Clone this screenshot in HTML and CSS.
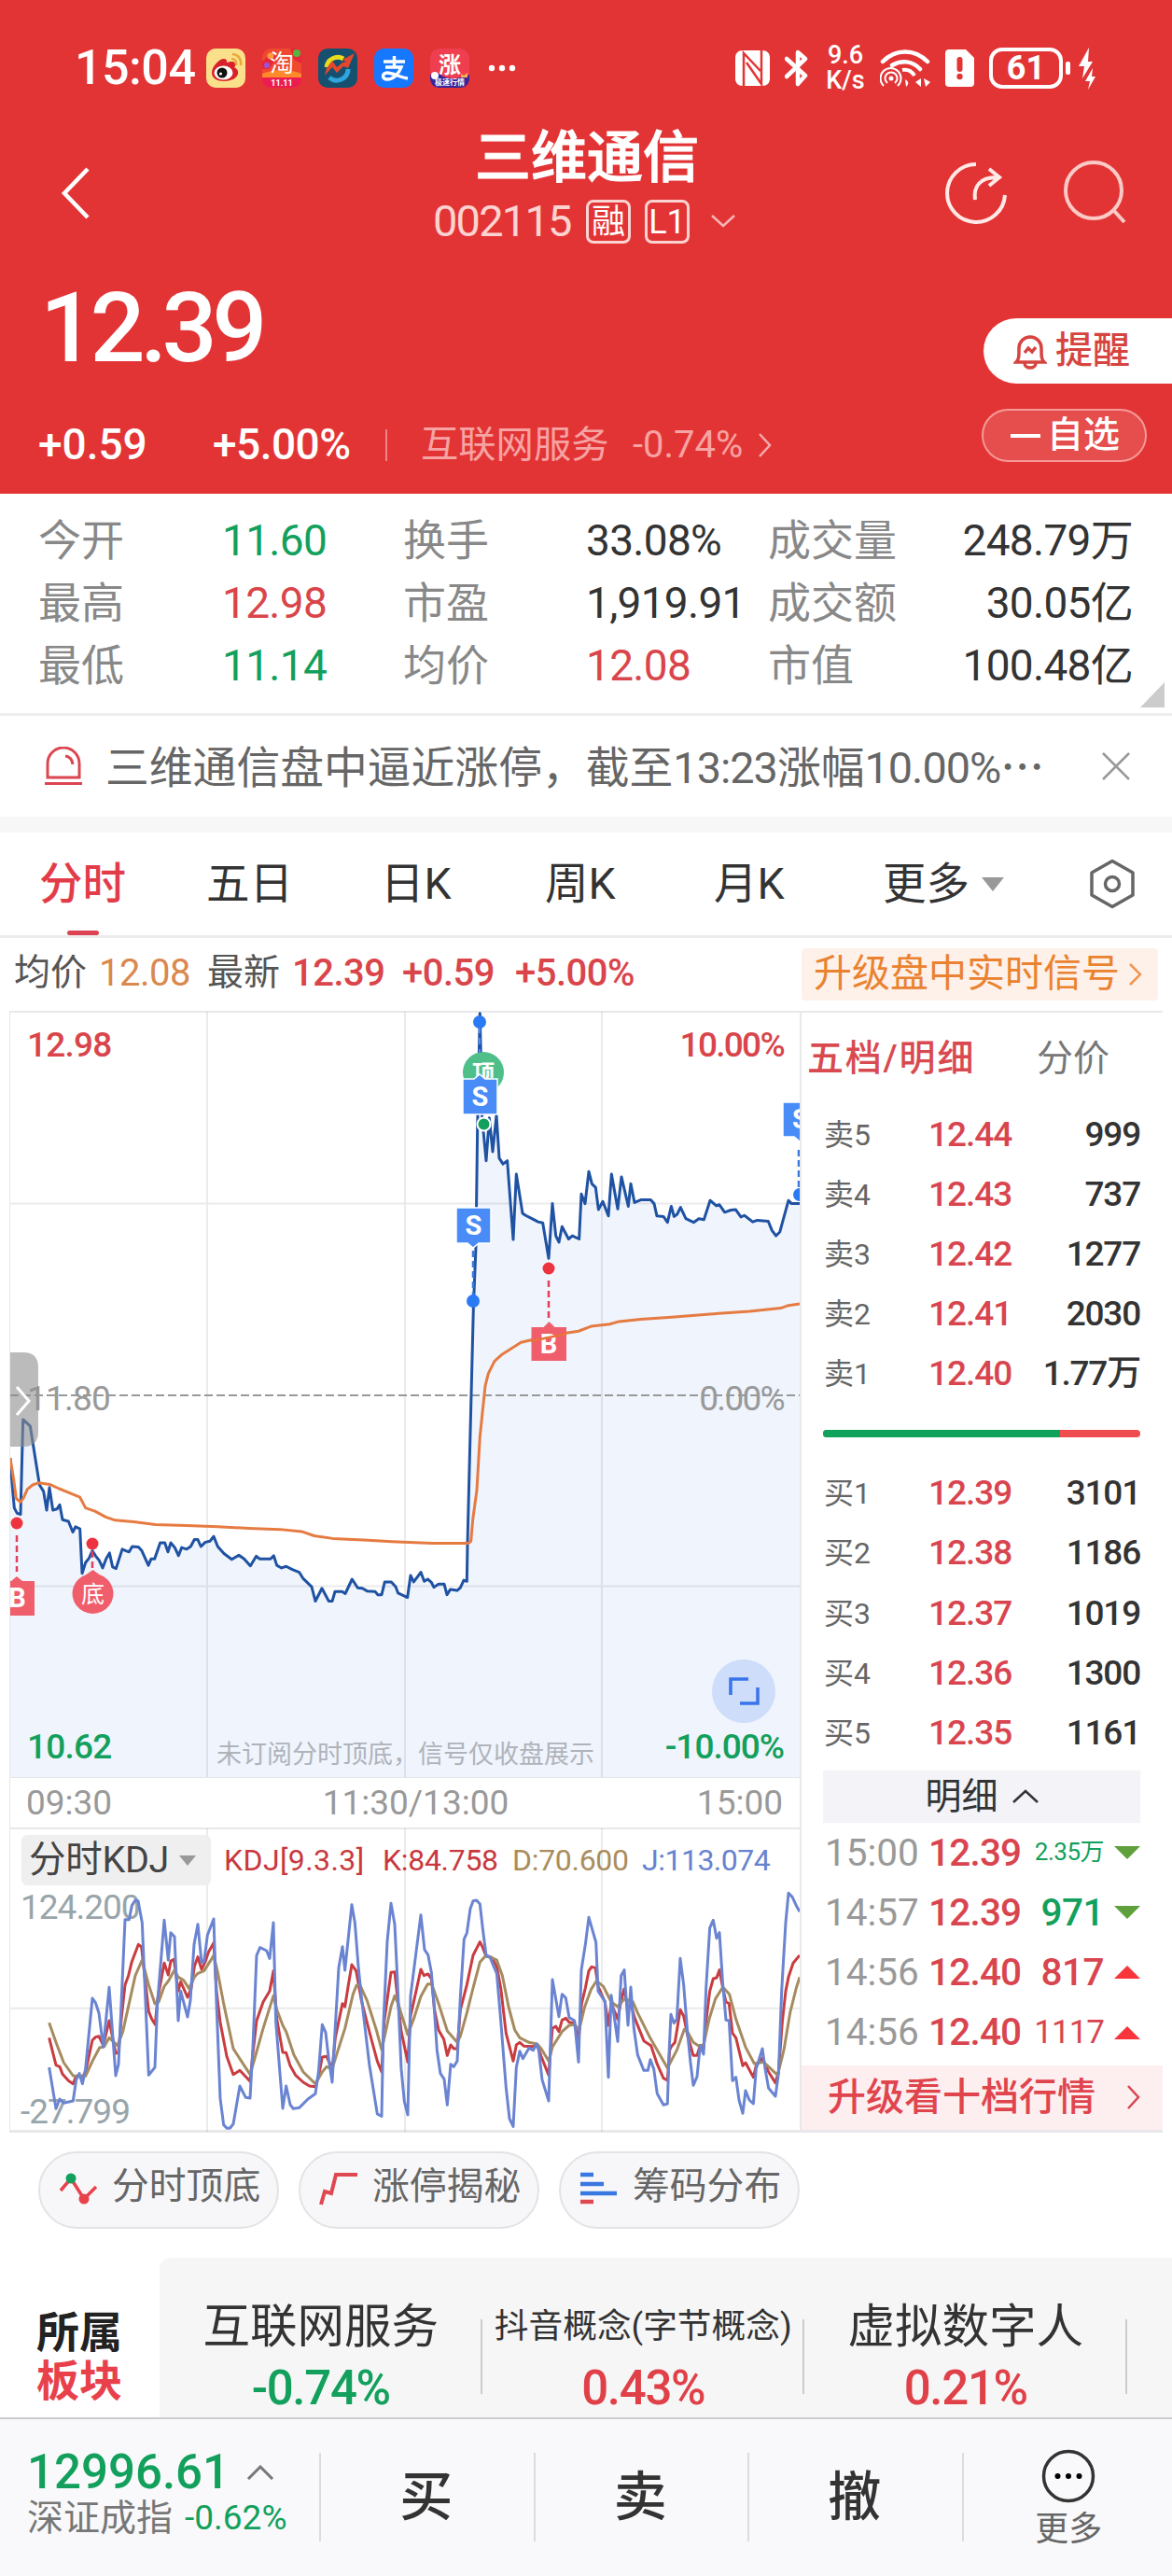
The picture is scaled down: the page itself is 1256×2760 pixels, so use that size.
FILE: index.html
```html
<!DOCTYPE html>
<html lang="zh-CN">
<head>
  <meta charset="UTF-8">
  <meta name="viewport" content="width=device-width, initial-scale=1.0">
  <title>三维通信 002115</title>
  <link rel="stylesheet" href="styles.css">
</head>
<body>
  <div class="page">
    <header class="header">
      <div class="status">
        <span class="clock">15:04</span>
        <div class="apps">
          <svg class="app" viewBox="0 0 42 42">
            <rect width="42" height="42" rx="10" fill="#fbe08c"/>
            <path d="M6 26C6 19 14 11 19 11c4 0 3 4 3 4s8-3 9 1c1 3-1 4-1 4s5 2 4 7c-1 5-8 8-15 8S6 32 6 26z" fill="#d8202a"/>
            <ellipse cx="18.500" cy="26" rx="10" ry="7.500" fill="#fff"/>
            <circle cx="17" cy="26" r="5.500" fill="#111"/>
            <circle cx="15.500" cy="27" r="1.600" fill="#fff"/>
            <path d="M28 6c6 0 10 5 9 12M27 11c4 0 6 3 5 7" fill="none" stroke="#e9a93a" stroke-width="2.600"/>
          </svg>
          <svg class="app" viewBox="0 0 42 42">
            <rect width="42" height="42" rx="10" fill="#f0492f"/>
            <path d="M0 14 10 4l6 6-9 12H0zM30 0h4c5 0 8 4 8 8v8l-8-4z" fill="#e5273c"/>
            <circle cx="37" cy="5" r="4" fill="#58b23c"/>
            <circle cx="9" cy="8" r="3.500" fill="#ff9b3d"/>
            <circle cx="5" cy="18" r="3" fill="#9a55d4"/>
            <path d="M0 28h42v4c0 6-4 10-10 10H10C4 42 0 38 0 32z" fill="#ec1c51"/>
            <path d="M0 27q21-8 42 0v4H0z" fill="#ff8a2b"/>
            <text x="21" y="25" class="app-char" font-size="26">淘</text>
            <text x="21" y="40" class="app-char" font-size="9" font-weight="700">11.11</text>
          </svg>
          <svg class="app" viewBox="0 0 42 42">
            <rect width="42" height="42" rx="10" fill="#15506f"/>
            <path d="M9 20a12 12 0 0 1 18-9" fill="none" stroke="#e8dc1f" stroke-width="5"/>
            <path d="M12 31a12 12 0 0 0 20-9" fill="none" stroke="#2fa5dd" stroke-width="5"/>
            <path d="m7 29 8-9 5 6 7-7 5 2L39 5 26 12l4 2-4 1-6 5-5-7-6 8z" fill="#e4472b"/>
          </svg>
          <svg class="app" viewBox="0 0 42 42">
            <rect width="42" height="42" rx="10" fill="#1677ff"/>
            <path d="M10 14h23M21.500 8v12M12 20h17c-3 8-9 13-15 13-6 0-6-7 0-7 6 0 14 5 22 6" fill="none" stroke="#fff" stroke-width="3.400"/>
          </svg>
          <svg class="app" viewBox="0 0 42 42">
            <rect width="42" height="42" rx="10" fill="#ee3e50"/>
            <path d="M0 28q8-4 14 2 12 5 28-2v4c0 6-4 10-10 10H10C4 42 0 38 0 32z" fill="#3a249a"/>
            <circle cx="5" cy="29" r="4" fill="#fff"/>
            <path d="m33 27 3 2 4-3v5h-7z" fill="#ffb54a"/>
            <text x="21" y="26" class="app-char" font-size="24" font-weight="700">涨</text>
            <text x="21" y="39" class="app-char" font-size="8" font-weight="700">极速行情</text>
          </svg>
        </div>
        <svg class="dots" viewBox="0 0 30 10" fill="#fff"><circle cx="4" cy="5" r="3.200"/><circle cx="15" cy="5" r="3.200"/><circle cx="26" cy="5" r="3.200"/></svg>
        <svg class="sys nfc" viewBox="0 0 37 38">
          <path d="M8 0h21c5 0 8 3 8 8v22c0 5-3 8-8 8H8c-5 0-8-3-8-8V8c0-5 3-8 8-8z" fill="#fff"/>
          <path d="M9 38V3l18 19M12 13l16 23V0" stroke="#e33435" stroke-width="2.500" fill="none"/>
        </svg>
        <svg class="sys bt" viewBox="0 0 25 42"><path d="m2 11 20 18-8 9V4l8 7L2 30" fill="none" stroke="#fff" stroke-width="4.500" stroke-linejoin="round" stroke-linecap="round"/></svg>
        <div class="speed"><span>9.6</span><span>K/s</span></div>
        <svg class="sys wifi" viewBox="0 0 54 42" fill="none" stroke="#fff">
          <path d="M3 14c14-14 34-14 48 0M13 18c10-6 22-5 30 4" stroke-width="4.500" stroke-linecap="round"/>
          <path d="M24 23c6-1 10 1 13 6" stroke-width="4"/>
          <path d="M4 40a11 11 0 1 1 15 0M8 37a6.500 6.500 0 1 1 8 0" stroke-width="2"/>
          <circle cx="12" cy="32" r="2.500" fill="#fff" stroke="none"/>
          <path d="M27 33q6 3 1 8zM38 36l6-4v9zM47 32l7 4-5 5z" fill="#fff" stroke="none"/>
        </svg>
        <svg class="sys sim" viewBox="0 0 31 40"><path d="M4 0h18l9 9v27q0 4-4 4H4q-4 0-4-4V4q0-4 4-4z" fill="#fff"/><path d="M15.500 11v10" stroke="#e33435" stroke-width="6" stroke-linecap="round"/><circle cx="15.500" cy="29" r="3.200" fill="#e33435"/></svg>
        <div class="battery">61</div>
        <svg class="sys bolt" viewBox="0 0 32 44" fill="#fff"><rect y="15" width="5" height="14" rx="2"/><path d="m25 0-11 20h6l-2 13 11-18h-5zM29 22l-8 14h5l-2 9 8-14h-4z"/></svg>
      </div>

      <div class="nav">
        <svg class="back" viewBox="0 0 32 56"><path d="M29 2 4 28l25 26" fill="none" stroke="#fff" stroke-width="4.500"/></svg>
        <div class="stock">
          <div class="stock-name">三维通信</div>
          <div class="stock-code">
            <span class="code">002115</span>
            <span class="badge">融</span>
            <span class="badge">L1</span>
            <svg class="code-caret" viewBox="0 0 28 16"><path d="m2 2 12 11L26 2" fill="none" stroke="#f6b4b4" stroke-width="2.500"/></svg>
          </div>
        </div>
        <svg class="share" viewBox="0 0 68 68" fill="none" stroke="#ffe9e6" stroke-width="4">
          <path d="M34 3A31 31 0 1 0 65 36"/>
          <path d="M33 41c-2-14 5-24 23-24M48 8l11 9-11 9"/>
        </svg>
        <svg class="search" viewBox="0 0 70 70" fill="none" stroke="#fbc9c6" stroke-width="4"><circle cx="34" cy="34" r="30"/><path d="m56 56 11 12"/></svg>
      </div>

      <div class="quote">
        <div class="price">12.39</div>
        <div class="remind">
          <svg class="bell" viewBox="0 0 36 40" fill="none" stroke="#d64440" stroke-width="3.500"><path d="M3 32c3-3 3-6 3-15a12 12 0 0 1 24 0c0 9 0 12 3 15zM12 33a6 5 0 0 0 12 0"/><path d="m12 22 4-5 4 4 4-5"/></svg>
          提醒
        </div>
      </div>
      <div class="change">
        <span class="chg">+0.59</span>
        <span class="pct">+5.00%</span>
        <i class="line"></i>
        <span class="industry">互联网服务</span>
        <span class="industry-pct">-0.74%</span>
        <svg class="arrow" viewBox="0 0 16 28"><path d="m2 2 11 12L2 26" fill="none" stroke="#f6a9a9" stroke-width="2.500"/></svg>
        <div class="follow"><i></i>自选</div>
      </div>
    </header>

    <section class="stats">
      <span>今开</span><b class="green">11.60</b><span>换手</span><b>33.08%</b><span>成交量</span><b>248.79万</b>
      <span>最高</span><b class="red">12.98</b><span>市盈</span><b>1,919.91</b><span>成交额</span><b>30.05亿</b>
      <span>最低</span><b class="green">11.14</b><span>均价</span><b class="red">12.08</b><span>市值</span><b>100.48亿</b>
      <i class="corner"></i>
    </section>

    <section class="notice">
      <svg class="alarm" viewBox="0 0 40 42" fill="none" stroke="#dc4650" stroke-width="3"><path d="M3 33V18a17 17 0 0 1 34 0v15zM0 39.500h40"/><path d="M22 10q7 1 8 9"/></svg>
      <span class="notice-text">三维通信盘中逼近涨停，截至<i>13:23</i>涨幅<i>10.00%</i><em>⋯</em></span>
      <svg class="close" viewBox="0 0 30 30"><path d="m1 1 28 28M29 1 1 29" stroke="#999" stroke-width="2.500"/></svg>
    </section>

    <nav class="tabs">
      <span class="tab active">分时</span>
      <span class="tab">五日</span>
      <span class="tab">日K</span>
      <span class="tab">周K</span>
      <span class="tab">月K</span>
      <span class="tab">更多</span>
      <i class="tri"></i>
      <svg class="setting" viewBox="0 0 50 54" fill="none" stroke="#666" stroke-width="3.500"><path d="M25 2.500 47 15v24L25 51.500 3 39V15z" stroke-linejoin="round"/><circle cx="25" cy="27" r="7.500"/></svg>
    </nav>

    <div class="info">
      <span class="info-label">均价</span><span class="info-avg">12.08</span>
      <span class="info-label latest">最新</span><span class="info-num">12.39</span><span class="info-num n2">+0.59</span><span class="info-num n3">+5.00%</span>
      <div class="signal">升级盘中实时信号<svg viewBox="0 0 16 26"><path d="m2 2 11 11L2 24" fill="none" stroke="#ef9550" stroke-width="2.500"/></svg></div>
    </div>

    <main class="board">
      <div class="charts">
        <div class="minute">
          <svg class="plot" viewBox="33 41.800 2538 1428.500" preserveAspectRatio="none">
            <polygon class="area" points="33,875 40,930 46,968 55,978 66,980 74,803 97,815 127,925 140,937 150,972 159,930 170,972 183,970 192,962 201,990 220,993 234,1013 243,1003 257,1007 264,1090 275,1070 297,1048 319,1066 330,1080 352,1052 362,1078 373,1081 393,1045 415,1050 425,1040 445,1041 456,1048 477,1075 497,1063 515,1033 530,1033 540,1050 549,1033 574,1057 584,1042 613,1040 625,1027 646,1040 687,1021 700,1040 745,1064 768,1056 805,1076 824,1058 835,1063 870,1063 880,1057 890,1075 962,1088 975,1100 1002,1115 1014,1142 1035,1118 1057,1142 1068,1142 1077,1124 1110,1128 1132,1101 1150,1117 1206,1124 1227,1130 1237,1106 1258,1106 1272,1115 1280,1127 1310,1135 1320,1094 1330,1106 1353,1088 1364,1105 1387,1107 1395,1116 1428,1110 1437,1130 1480,1117 1491,1103 1501,1105 1503,1035 1522,595 1530,480 1535,260 1543,45 1550,240 1563,320 1573,240 1584,303 1596,235 1605,315 1631,320 1650,467 1660,345 1680,418 1745,436 1764,502 1776,400 1787,460 1797,472 1807,443 1828,466 1862,466 1869,382 1881,400 1893,340 1915,370 1924,411 1938,396 1956,423 1966,345 1986,410 1998,350 2020,405 2028,363 2040,398 2092,393 2103,400 2112,423 2146,435 2158,405 2188,407 2205,428 2230,435 2263,430 2283,394 2313,402 2330,416 2365,411 2382,425 2420,434 2470,433 2495,460 2507,453 2535,394 2571,400 2571,1471 33,1471"/>
            <path class="grid" d="M33 400H2571M33 1114H2571M666 42V1471M1302 42V1471M1935 42V1471"/>
            <path class="zero" d="M33 758H2571"/>
            <polyline class="now" points="33,875 40,930 46,968 55,978 66,980 74,803 97,815 127,925 140,937 150,972 159,930 170,972 183,970 192,962 201,990 220,993 234,1013 243,1003 257,1007 264,1090 275,1070 286,1062 297,1048 308,1058 319,1066 330,1080 341,1063 352,1052 362,1078 373,1081 393,1045 405,1048 415,1050 425,1040 445,1041 456,1048 477,1075 486,1063 497,1063 515,1033 530,1033 540,1050 549,1033 562,1042 574,1057 584,1042 600,1045 613,1040 625,1027 636,1027 646,1040 660,1032 675,1030 687,1021 700,1040 720,1053 745,1064 768,1056 785,1063 805,1076 824,1058 835,1063 870,1063 880,1057 890,1075 905,1080 920,1077 940,1083 962,1088 975,1100 1002,1115 1014,1142 1035,1118 1057,1142 1068,1142 1077,1124 1100,1124 1110,1128 1132,1101 1150,1117 1165,1118 1180,1123 1206,1124 1215,1130 1227,1130 1237,1106 1258,1106 1272,1115 1280,1127 1310,1135 1320,1094 1330,1106 1353,1088 1364,1105 1375,1101 1387,1107 1395,1116 1410,1110 1428,1110 1437,1130 1448,1120 1470,1122 1480,1117 1491,1103 1501,1105 1503,1035 1522,595 1530,480 1535,260 1543,45 1550,240 1563,320 1573,240 1584,303 1596,235 1605,315 1617,326 1631,320 1650,467 1660,345 1680,418 1690,422 1710,428 1730,434 1745,436 1764,502 1776,400 1787,460 1797,472 1807,443 1828,466 1840,460 1862,466 1869,382 1881,400 1893,340 1903,363 1915,370 1924,411 1938,396 1956,423 1966,345 1986,410 1998,350 2020,405 2028,363 2040,398 2060,393 2092,393 2103,400 2112,423 2133,424 2146,435 2158,405 2167,424 2177,420 2188,407 2205,428 2230,435 2247,428 2263,430 2283,394 2303,404 2313,402 2330,416 2350,412 2365,411 2382,425 2393,422 2420,434 2435,431 2470,433 2482,450 2495,460 2507,453 2535,394 2545,400 2571,400"/>
            <polyline class="avg" points="33,875 44,915 52,950 65,957 75,950 88,933 105,925 125,921 160,924 190,932 215,938 257,948 275,968 305,974 340,985 370,991 430,994 500,999 600,1001 700,1003 800,1006 900,1008 970,1012 1010,1020 1070,1025 1170,1028 1260,1031 1390,1034 1505,1034 1514,1030 1520,990 1533,935 1543,835 1560,740 1570,717 1590,694 1615,681 1675,659 1710,654 1805,643 1860,638 1900,629 1960,625 1990,620 2060,616 2160,612 2310,605 2410,601 2510,595 2535,590 2571,587"/>
          </svg>
          <span class="axis a1 red">12.98</span>
          <span class="axis a2">11.80</span>
          <span class="axis a3 green">10.62</span>
          <span class="axis b1 red">10.00%</span>
          <span class="axis b2">0.00%</span>
          <span class="axis b3 green">-10.00%</span>
          <span class="hint">未订阅分时顶底，信号仅收盘展示</span>
          <!-- buy / sell marks -->
          <svg class="marks" viewBox="11 1084 846 820">
            <g class="mark-red">
              <path class="dash" d="M18 1645V1684M99 1662V1680M588 1372V1414"/>
              <circle cx="18" cy="1632" r="6.500"/><circle cx="99" cy="1654" r="6.500"/><circle cx="588" cy="1359" r="6.500"/>
              <path class="tag" d="M-1 1694h13l6-5 6 5h13v37H-1zM569.500 1422h13l6-6 6 6h12.500v36h-37.500z"/>
              <path class="tag" d="M99.500 1682l7 5a22 21.500 0 1 1-14 0z"/>
            </g>
            <path d="M514 1100V1152" stroke="#4b8df8" stroke-width="2" stroke-dasharray="7 5"/>
            <circle cx="518" cy="1149" r="22" fill="#4fbf8a"/>
            <text class="mark-text" x="518" y="1158" font-size="24">顶</text>
            <g class="mark-blue">
              <path class="dash" d="M507 1340V1388M856 1232V1272"/>
              <circle cx="514" cy="1095" r="7"/><circle cx="507" cy="1394" r="7"/><circle cx="857" cy="1280" r="7"/>
              <path class="tag" d="M496 1156h12l6-5 6 5h13v38h-37zM489 1294h37v38h-13l-6 5-6-5h-12zM839 1181h37v37h-13l-6 5-6-5h-12z"/>
            </g>
            <circle cx="518.500" cy="1204.500" r="7" fill="#12a05c" stroke="#fff" stroke-width="2"/>
            <g class="mark-text">
              <text x="514.500" y="1185" font-size="29">S</text>
              <text x="507.500" y="1323" font-size="29">S</text>
              <text x="858" y="1209" font-size="29">S</text>
              <text x="18.500" y="1722" font-size="29">B</text>
              <text x="588" y="1450" font-size="29">B</text>
              <text x="99.500" y="1717" font-size="25" class="thin">底</text>
            </g>
            <path d="M569 1437 607 1429" stroke="#e8733a" stroke-width="2.500"/>
            <path d="M11 1449h14q16 0 16 16v69q0 16-16 16H11z" fill="#8e8e8e" fill-opacity=".6"/>
            <path d="m18 1486 13 15-13 15" fill="none" stroke="#fff" stroke-width="3"/>
            <circle cx="797" cy="1812" r="34" fill="#cdddfa"/>
            <path d="M783 1816v-17h19M812 1808v17h-19" fill="none" stroke="#3a74ea" stroke-width="3.500"/>
          </svg>
        </div>
        <div class="times"><span>09:30</span><span>11:30/13:00</span><span>15:00</span></div>
        <div class="kdj">
          <div class="kdj-head">
            <div class="kdj-btn">分时KDJ<i class="tri small"></i></div>
            <span class="k">KDJ[9.3.3]</span><span class="k k2">K:84.758</span><span class="d">D:70.600</span><span class="j">J:113.074</span>
          </div>
          <span class="range hi">124.200</span>
          <span class="range lo">-27.799</span>
          <svg class="kdj-plot" viewBox="33 177 2538 975" preserveAspectRatio="none">
            <path class="grid" d="M33 755H2571M666 177V1152M1302 177V1152M1935 177V1152"/>
            <polyline class="line-k" points="158,850 180,938 192,943 201,967 220,988 235,998 245,973 265,975 275,960 297,858 307,848 318,845 332,875 351,795 372,900 381,897 390,790 402,680 413,650 424,605 445,550 455,558 465,650 478,765 488,790 499,808 506,730 528,610 541,648 549,603 559,598 573,700 581,670 603,720 615,690 625,620 636,590 648,630 660,605 670,575 687,545 696,700 708,800 729,910 750,968 771,955 804,990 813,900 825,795 846,735 867,700 879,635 890,790 909,897 920,898 933,940 950,970 975,993 995,1005 1014,1007 1025,970 1036,912 1050,910 1068,950 1078,850 1101,740 1109,750 1120,680 1131,615 1145,635 1162,730 1190,840 1213,925 1227,960 1235,800 1257,640 1269,638 1280,740 1290,830 1311,928 1320,780 1340,690 1353,630 1363,650 1376,645 1387,660 1397,760 1410,825 1427,855 1438,907 1449,873 1459,885 1470,885 1480,760 1501,680 1521,585 1543,542 1552,560 1563,588 1580,592 1597,620 1610,690 1627,835 1650,925 1660,873 1671,865 1685,877 1715,878 1727,872 1740,910 1764,970 1776,820 1787,813 1797,830 1807,793 1819,787 1830,800 1847,803 1860,860 1870,740 1882,690 1893,635 1902,622 1914,625 1923,685 1945,735 1956,810 1965,740 1986,790 1997,730 2007,693 2019,760 2028,740 2040,785 2070,860 2093,875 2113,935 2133,980 2146,987 2153,890 2157,880 2170,865 2187,760 2198,780 2210,840 2229,907 2241,907 2251,875 2262,885 2272,780 2282,700 2293,660 2304,657 2313,632 2324,690 2334,735 2344,740 2355,835 2366,850 2388,940 2397,930 2422,977 2431,940 2451,915 2471,960 2493,995 2503,960 2515,800 2526,700 2535,655 2550,610 2571,585"/>
            <polyline class="line-d" points="158,802 180,865 205,930 235,972 275,973 297,925 320,882 335,878 351,850 378,875 395,830 415,740 435,650 457,600 478,680 498,740 510,735 528,685 541,668 561,632 573,655 590,665 608,692 625,655 636,643 656,635 675,605 687,585 700,640 719,740 750,885 804,968 815,930 846,820 879,715 890,760 909,810 920,830 945,905 975,960 1014,998 1036,960 1050,943 1068,950 1085,895 1109,820 1135,710 1146,682 1157,680 1180,730 1210,825 1227,888 1240,830 1257,750 1269,715 1280,740 1311,840 1330,790 1353,717 1375,677 1388,677 1410,740 1438,828 1470,865 1480,845 1501,770 1521,690 1543,607 1560,588 1580,592 1597,600 1615,650 1635,750 1655,825 1671,850 1701,865 1727,870 1740,885 1764,925 1776,880 1807,830 1830,810 1847,808 1862,825 1880,750 1900,695 1918,667 1940,685 1965,735 1986,750 2007,725 2035,735 2050,770 2090,850 2146,947 2176,890 2200,823 2210,830 2229,865 2245,875 2262,873 2280,790 2300,725 2324,687 2345,710 2366,790 2397,880 2425,933 2455,928 2500,970 2520,890 2540,770 2560,690 2571,655"/>
            <polyline class="line-j" points="158,945 180,1078 192,1047 204,1060 235,1053 245,985 255,965 265,998 275,950 297,723 307,737 318,770 332,880 351,688 372,972 381,935 390,740 402,470 415,470 424,425 435,408 444,410 457,480 478,970 498,945 506,740 528,472 541,600 549,512 561,525 573,795 581,700 603,783 612,730 624,550 636,485 648,608 656,605 667,520 687,468 696,740 708,1045 719,1130 730,1141 740,1140 750,1127 771,1005 790,1042 804,1044 813,880 825,585 836,560 857,570 867,595 879,480 887,800 909,1077 920,1005 933,1065 943,1078 962,1075 990,1047 1014,1030 1024,960 1036,808 1047,833 1057,920 1068,993 1077,830 1089,625 1101,557 1109,633 1131,422 1141,480 1152,620 1162,720 1188,940 1213,1095 1227,1102 1233,800 1245,540 1257,418 1269,485 1277,650 1290,950 1300,1055 1311,1098 1320,715 1353,455 1365,567 1376,583 1387,640 1395,740 1405,890 1416,965 1428,983 1438,1066 1449,935 1459,943 1470,925 1480,720 1492,533 1501,513 1512,435 1521,410 1532,408 1543,420 1552,500 1563,585 1575,590 1587,620 1597,643 1608,770 1627,1010 1638,1110 1650,1135 1660,945 1671,893 1681,917 1701,883 1714,890 1725,870 1732,890 1743,985 1764,1053 1776,663 1797,782 1807,710 1819,722 1830,785 1847,795 1860,928 1869,632 1882,550 1893,463 1916,543 1923,700 1945,733 1956,977 1965,713 1986,862 1997,650 2007,632 2019,810 2028,687 2038,820 2050,905 2070,955 2083,955 2091,920 2102,950 2113,1030 2133,1066 2146,1062 2151,900 2157,775 2167,803 2176,790 2187,595 2198,680 2210,830 2220,930 2229,1003 2241,975 2251,875 2262,903 2270,690 2282,497 2293,472 2304,530 2313,512 2324,680 2334,793 2344,795 2355,988 2366,977 2376,1050 2388,1093 2397,1020 2409,1050 2422,1062 2431,950 2451,885 2460,950 2471,1012 2493,1038 2503,965 2513,700 2526,480 2535,385 2547,397 2560,425 2571,445"/>
          </svg>
        </div>
      </div>

      <aside class="depth">
        <div class="depth-tabs"><span class="on">五档/明细</span><span>分价</span></div>
        <ul class="orders">
          <li><span>卖5</span><b>12.44</b><em>999</em></li>
          <li><span>卖4</span><b>12.43</b><em>737</em></li>
          <li><span>卖3</span><b>12.42</b><em>1277</em></li>
          <li><span>卖2</span><b>12.41</b><em>2030</em></li>
          <li><span>卖1</span><b>12.40</b><em>1.77万</em></li>
        </ul>
        <div class="ratio"><i style="width: 74.7%"></i></div>
        <ul class="orders">
          <li><span>买1</span><b>12.39</b><em>3101</em></li>
          <li><span>买2</span><b>12.38</b><em>1186</em></li>
          <li><span>买3</span><b>12.37</b><em>1019</em></li>
          <li><span>买4</span><b>12.36</b><em>1300</em></li>
          <li><span>买5</span><b>12.35</b><em>1161</em></li>
        </ul>
        <div class="detail-btn">明细<svg viewBox="0 0 28 16"><path d="M1 14 14 2l13 12" fill="none" stroke="#333" stroke-width="2.500"/></svg></div>
        <ul class="deals">
          <li><span>15:00</span><b>12.39</b><em class="green s">2.35万</em><i class="down"></i></li>
          <li><span>14:57</span><b>12.39</b><em class="green">971</em><i class="down"></i></li>
          <li><span>14:56</span><b>12.40</b><em>817</em><i class="up"></i></li>
          <li><span>14:56</span><b>12.40</b><em class="m">1117</em><i class="up"></i></li>
        </ul>
        <div class="upgrade">升级看十档行情<svg viewBox="0 0 16 28"><path d="m2 2 11 12L2 26" fill="none" stroke="#d9454f" stroke-width="2.500"/></svg></div>
      </aside>
    </main>

    <div class="chips">
      <div class="chip">
        <svg viewBox="0 0 42 34"><path d="m2 19 11-13 14 22L40 15" fill="none" stroke="#e8414b" stroke-width="3.500"/><circle cx="13" cy="6" r="5.500" fill="#12a05c"/><circle cx="27" cy="28" r="5.500" fill="#e8414b"/></svg>
        分时顶底
      </div>
      <div class="chip">
        <svg viewBox="0 0 42 36"><path d="M2 35 6 21l7 2 5-20h23" fill="none" stroke="#e04851" stroke-width="4"/></svg>
        涨停揭秘
      </div>
      <div class="chip">
        <svg viewBox="0 0 42 36"><path d="M1 3h14M1 13h25M1 23h39" stroke="#3878e0" stroke-width="4.500"/><path d="M1 32h14" stroke="#e04851" stroke-width="4.500"/></svg>
        筹码分布
      </div>
    </div>

    <section class="sectors">
      <div class="sector-title">所属<br><b>板块</b></div>
      <div class="sector-list">
        <div class="sector"><span>互联网服务</span><b class="green">-0.74%</b></div>
        <div class="sector"><span class="long">抖音概念(字节概念)</span><b>0.43%</b></div>
        <div class="sector"><span>虚拟数字人</span><b>0.21%</b></div>
      </div>
    </section>

    <footer class="bottom">
      <div class="index">
        <div class="index-num">12996.61<svg viewBox="0 0 30 16"><path d="M2 15 15 2l13 13" fill="none" stroke="#777" stroke-width="3"/></svg></div>
        <div class="index-name">深证成指<span>-0.62%</span></div>
      </div>
      <div class="act">买</div>
      <div class="act">卖</div>
      <div class="act">撤</div>
      <div class="act more">
        <svg viewBox="0 0 58 58"><circle cx="29" cy="29" r="26.500" fill="none" stroke="#333" stroke-width="3.500"/><circle cx="17.500" cy="29" r="3"/><circle cx="29" cy="29" r="3"/><circle cx="40.500" cy="29" r="3"/></svg>
        更多
      </div>
    </footer>
  </div>
</body>
</html>
```
FILE: styles.css
```css
* {
  box-sizing: border-box;
}
body {
  margin: 0;
  background: #fff;
  color: #333;
  font-family: Roboto, "Noto Sans CJK SC", sans-serif;
}
svg {
  display: block;
  flex: none;
}
b, em, i {
  font-weight: 500;
  font-style: normal;
}
ul {
  margin: 0;
  padding: 0;
  list-style: none;
}
span {
  white-space: nowrap;
}
.page {
  width: 1256px;
  height: 2760px;
  overflow: hidden;
  line-height: 1.2;
}
.green {
  color: #12a05c !important;
}
.red {
  color: #d9454a !important;
}

/* header */
.header {
  height: 529px;
  background: #e33435;
  color: #fff;
}
.status {
  display: flex;
  align-items: center;
  height: 144px;
  padding: 2px 0 0 80px;
}
.clock {
  width: 141px;
  font-size: 52px;
  font-weight: 500;
  letter-spacing: -.5px;
}
.apps {
  display: flex;
  gap: 18px;
}
.app {
  width: 42px;
  height: 42px;
}
.app-char {
  fill: #fff;
  text-anchor: middle;
}
.dots {
  width: 30px;
  height: 10px;
  margin-left: 20px;
}
.nfc {
  width: 37px;
  height: 38px;
  margin-left: 235px;
}
.bt {
  width: 25px;
  height: 42px;
  margin-left: 16px;
}
.speed {
  display: flex;
  flex-direction: column;
  align-items: center;
  width: 44px;
  margin-left: 18px;
  font-size: 27px;
  font-weight: 500;
  line-height: 27px;
}
.wifi {
  width: 54px;
  height: 42px;
  margin-left: 15px;
}
.sim {
  width: 31px;
  height: 40px;
  margin-left: 16px;
}
.battery {
  width: 79px;
  height: 44px;
  margin-left: 16px;
  border: 4px solid #fff;
  border-radius: 14px;
  font-size: 36px;
  font-weight: 700;
  line-height: 37px;
  text-align: center;
}
.bolt {
  width: 32px;
  height: 44px;
  margin-left: 3px;
  overflow: visible;
}
.nav {
  display: flex;
  height: 126px;
  padding-left: 65px;
}
.back {
  width: 32px;
  height: 56px;
  margin-top: 35px;
}
.stock {
  width: 640px;
  margin-left: 212px;
}
.stock-name {
  height: 66px;
  margin-top: -7px;
  text-align: center;
  font-size: 60px;
  font-weight: 500;
  line-height: 66px;
  -webkit-text-stroke: 1.2px #fff;
}
.stock-code {
  display: flex;
  align-items: center;
  height: 68px;
  margin-left: 155px;
}
.code {
  width: 164px;
  color: #fbd3d1;
  font-size: 47px;
  letter-spacing: -1.8px;
}
.badge {
  width: 48px;
  height: 47px;
  margin-right: 15px;
  border: 3px solid #fbd3d1;
  border-radius: 8px;
  font-size: 36px;
  line-height: 42px;
  text-align: center;
}
.code-caret {
  width: 28px;
  height: 16px;
  margin-left: 7px;
}
.share {
  width: 68px;
  height: 68px;
  margin: 29px 0 0 63px;
}
.search {
  width: 70px;
  height: 70px;
  margin: 26px 0 0 58px;
}
.quote {
  display: flex;
  justify-content: space-between;
  height: 160px;
  padding-left: 43px;
}
.price {
  margin-top: 20px;
  font-size: 104px;
  font-weight: 500;
  letter-spacing: -5.500px;
  line-height: 124px;
}
.remind {
  display: flex;
  align-items: center;
  width: 202px;
  height: 70px;
  margin-top: 71px;
  padding-left: 32px;
  border-radius: 36px 0 0 36px;
  background: #fff;
  color: #d64440;
  font-size: 40px;
  font-weight: 500;
}
.bell {
  width: 36px;
  height: 40px;
  margin-right: 9px;
}
.change {
  display: flex;
  align-items: center;
  height: 76px;
  padding: 18px 0 0 41px;
  font-size: 46px;
}
.chg {
  width: 187px;
  font-weight: 500;
}
.pct {
  width: 185px;
  font-weight: 500;
  letter-spacing: -.5px;
}
.line {
  width: 2px;
  height: 34px;
  background: #ee8484;
}
.industry {
  width: 227px;
  margin-left: 36px;
  color: #f6a3a3;
  font-size: 40.300px;
}
.industry-pct {
  width: 134px;
  color: #f6a3a3;
  font-size: 40px;
}
.arrow {
  width: 16px;
  height: 28px;
}
.follow {
  display: flex;
  align-items: center;
  width: 177px;
  height: 57px;
  margin: -21px 0 0 224px;
  padding-left: 29px;
  border: 2px solid #f59a98;
  border-radius: 29px;
  background: #e64d4d;
  font-size: 39px;
  font-weight: 500;
}
.follow i {
  width: 32px;
  height: 4px;
  margin-right: 7px;
  background: #fff;
}

/* stats */
.stats {
  position: relative;
  display: grid;
  grid-template-columns: 197px 194px 196px 195px 190px 201px;
  grid-auto-rows: 67px;
  align-items: center;
  height: 238px;
  padding: 17px 0 0 41px;
  border-bottom: 3px solid #eee;
  font-size: 46px;
}
.stats span {
  color: #888;
}
.stats b {
  font-weight: 400;
  letter-spacing: -.7px;
  white-space: nowrap;
}
.stats b:nth-of-type(3n) {
  text-align: right;
}
.corner {
  position: absolute;
  right: 8px;
  bottom: 6px;
  border-left: 26px solid transparent;
  border-bottom: 27px solid #ccc;
}

/* notice */
.notice {
  display: flex;
  align-items: center;
  height: 108px;
  padding-left: 48px;
}
.alarm {
  width: 40px;
  height: 42px;
}
.notice-text {
  width: 1068px;
  margin-left: 25px;
  color: #666;
  font-size: 46.800px;
}
.notice-text i {
  font-weight: 400;
  letter-spacing: -1px;
}
.notice-text em {
  font-family: "Noto Sans CJK SC", sans-serif;
}
.close {
  width: 30px;
  height: 30px;
}

/* tabs */
.tabs {
  display: flex;
  align-items: center;
  height: 130px;
  padding-left: 42px;
  border-top: 17px solid #f7f7f7;
  border-bottom: 3px solid #ececec;
  color: #333;
  font-size: 46.500px;
}
.tab {
  width: 181px;
  line-height: 110px;
}
.tab:nth-child(2) {
  width: 187px;
}
.tab:nth-child(3) {
  width: 176px;
}
.tab:nth-child(6) {
  width: 106px;
}
.tab.active {
  position: relative;
  width: 179px;
  color: #e33c49;
  font-weight: 500;
}
.tab.active::after {
  content: "";
  position: absolute;
  left: 30px;
  bottom: 0;
  width: 34px;
  height: 5px;
  border-radius: 3px;
  background: #dc4454;
}
.tri {
  border: 12px solid transparent;
  border-top: 15px solid #999;
  border-bottom: 0;
}
.tri.small {
  border-width: 11px 9px 0;
}
.setting {
  width: 50px;
  height: 54px;
  margin-left: 91px;
}

/* latest price line */
.info {
  display: flex;
  align-items: center;
  height: 78px;
  padding: 0 0 3px 15px;
  font-size: 40px;
}
.info-label {
  width: 91px;
  color: #555;
  font-size: 39px;
}
.info-avg {
  width: 116px;
  color: #d9884e;
  letter-spacing: -.5px;
}
.latest {
  width: 91px;
}
.info-num {
  width: 118px;
  color: #d9454a;
  font-weight: 500;
  letter-spacing: -.5px;
}
.n2 {
  width: 121px;
}
.n3 {
  width: 307px;
}
.signal {
  display: flex;
  align-items: center;
  width: 382px;
  height: 56px;
  margin-top: 3px;
  padding-left: 13px;
  border-radius: 4px;
  background: #fdf1ea;
  color: #ea8230;
  font-size: 41px;
  white-space: nowrap;
}
.signal svg {
  width: 16px;
  height: 26px;
  margin-left: 9px;
}

/* charts */
.board {
  display: flex;
  width: 1236px;
  height: 1202px;
  margin-left: 10px;
  border-top: 2px solid #e8e8ea;
  border-bottom: 3px solid #e8e8ea;
}
.charts {
  flex: none;
  width: 849px;
  border-left: 1px solid #e8e8ea;
  border-right: 2px solid #e8e8ea;
}
.minute {
  position: relative;
  height: 820px;
  border-bottom: 2px solid #e4e6ec;
}
.plot, .marks {
  position: absolute;
  left: 0;
  top: -1px;
  width: 846px;
  height: 820px;
}
.area {
  fill: #eff4fd;
}
.grid, .zero, .now, .avg, .line-k, .line-d, .line-j {
  fill: none;
  vector-effect: non-scaling-stroke;
  stroke-linejoin: round;
}
.grid {
  stroke: #000;
  stroke-opacity: .08;
  stroke-width: 2px;
}
.zero {
  stroke: #999;
  stroke-width: 2px;
  stroke-dasharray: 9 4;
}
.now {
  stroke: #1f52a2;
  stroke-width: 3px;
}
.avg {
  stroke: #e67b42;
  stroke-width: 3px;
}
.axis {
  position: absolute;
  color: #999;
  font-size: 37px;
  font-weight: 500;
  line-height: 44px;
}
.a1, .b1 {
  top: 13px;
}
.a2, .b2 {
  top: 392px;
  font-weight: 400;
}
.a3, .b3 {
  top: 765px;
}
.a1, .a2, .a3 {
  left: 18px;
  letter-spacing: -.8px;
}
.b1, .b2, .b3 {
  right: 17px;
  letter-spacing: -1.7px;
}
.b3 {
  letter-spacing: -1px;
}
.hint {
  position: absolute;
  left: 221px;
  top: 779px;
  color: #b0b3ba;
  font-size: 27px;
}
.dash {
  fill: none;
  stroke-width: 2.5;
  stroke-dasharray: 7 4;
}
.mark-red {
  fill: #ee3340;
}
.mark-red .dash {
  stroke: #e0405a;
}
.mark-red .tag {
  fill: #f05e6c;
}
.mark-blue {
  fill: #2b7af5;
}
.mark-blue .dash {
  stroke: #3b78dc;
}
.mark-blue .tag {
  fill: #4a8cf7;
  stroke: #fff;
  stroke-width: 1.5;
}
.mark-text {
  fill: #fff;
  font-weight: 700;
  text-anchor: middle;
}
.thin {
  font-weight: 400;
}
.times {
  display: flex;
  justify-content: space-between;
  align-items: center;
  height: 53px;
  padding: 2px 18px 0 17px;
  color: #999;
  font-size: 37px;
}
.times span:nth-child(2) {
  margin-left: 24px;
}
.kdj {
  position: relative;
  height: 324px;
  border-top: 2px solid #e8e8ea;
}
.kdj-plot {
  position: absolute;
  left: 0;
  top: -1px;
  width: 846px;
  height: 325px;
}
.kdj-head {
  position: relative;
  z-index: 1;
  display: flex;
  align-items: center;
  height: 54px;
  margin-top: 6px;
  padding-left: 12px;
  font-size: 32px;
}
.kdj-btn {
  display: flex;
  align-items: center;
  gap: 11px;
  width: 203px;
  height: 54px;
  margin-right: 14px;
  padding-left: 8px;
  border-radius: 6px;
  background: #efefef;
  color: #444;
  font-size: 39.500px;
  letter-spacing: -.3px;
  white-space: nowrap;
}
.k {
  width: 170px;
  color: #c8383e;
  letter-spacing: .4px;
}
.k2 {
  width: 139px;
  letter-spacing: -.3px;
}
.d {
  width: 139px;
  color: #a98d5e;
  letter-spacing: -.3px;
}
.j {
  color: #6882cf;
  letter-spacing: -.5px;
}
.range {
  position: absolute;
  left: 11px;
  color: #98a5aa;
  font-size: 37px;
  line-height: 44px;
  letter-spacing: -1px;
}
.hi {
  top: 62px;
}
.lo {
  top: 281px;
}
.line-k, .line-d, .line-j {
  stroke-width: 3px;
}
.line-k {
  stroke: #c93c40;
}
.line-d {
  stroke: #a58b5f;
}
.line-j {
  stroke: #6a84d2;
}

/* order book */
.depth {
  flex: 1;
}
.depth-tabs {
  display: flex;
  align-items: center;
  height: 99px;
  padding-left: 6px;
  color: #777;
  font-size: 39px;
}
.depth-tabs .on {
  width: 246px;
  color: #d94a50;
  font-weight: 500;
  letter-spacing: 1.8px;
}
.orders li {
  display: flex;
  align-items: center;
  height: 64.100px;
  padding: 0 24px;
  font-size: 37px;
}
.orders span {
  width: 112px;
  color: #666;
  font-size: 32px;
}
.orders b {
  color: #d9454f;
  letter-spacing: -1px;
}
.orders em {
  flex: 1;
  text-align: right;
  font-weight: 500;
  letter-spacing: -1.2px;
}
.ratio {
  height: 8px;
  margin: 28px 24px 28px 23px;
  border-radius: 4px;
  background: #ef4c50;
  overflow: hidden;
}
.ratio i {
  display: block;
  height: 8px;
  background: #10a25a;
}
.detail-btn {
  display: flex;
  align-items: center;
  justify-content: center;
  height: 56px;
  margin: 8px 24px 0 23px;
  background: #f3f3f8;
  font-size: 39px;
}
.detail-btn svg {
  width: 28px;
  height: 16px;
  margin-left: 15px;
}
.deals li {
  display: flex;
  align-items: center;
  height: 64.200px;
  padding-left: 25px;
  font-size: 40.500px;
}
.deals span {
  width: 111px;
  color: #999;
}
.deals b {
  width: 97px;
  color: #d9454f;
  letter-spacing: -.8px;
}
.deals em {
  width: 91px;
  text-align: right;
  color: #d9454f;
  letter-spacing: -.5px;
}
.deals .s {
  font-size: 26px;
  font-weight: 400;
}
.deals .m {
  font-size: 35px;
  font-weight: 400;
  letter-spacing: -1px;
}
.down, .up {
  margin-left: 11px;
  border: 14px solid transparent;
}
.down {
  border-top-color: #5fa03c;
  border-bottom: 0;
}
.up {
  border-bottom-color: #f8353a;
  border-top: 0;
}
.upgrade {
  display: flex;
  align-items: center;
  height: 69px;
  margin-top: 3px;
  padding-left: 28px;
  background: #fdeef0;
  color: #e0444c;
  font-size: 41px;
  font-weight: 500;
}
.upgrade svg {
  width: 16px;
  height: 28px;
  margin-left: 33px;
}

/* chips */
.chips {
  display: flex;
  gap: 21px;
  height: 134px;
  padding: 20px 0 0 41px;
}
.chip {
  display: flex;
  align-items: center;
  width: 258px;
  height: 83px;
  padding: 0 0 7px 20px;
  border: 2px solid #e3e3e6;
  border-radius: 42px;
  background: #f7f7f9;
  color: #666;
  font-size: 39.800px;
}
.chip svg {
  width: 42px;
  height: 36px;
  margin: 4px 15px 0 0;
}

/* sectors */
.sectors {
  display: flex;
  height: 171px;
}
.sector-title {
  width: 171px;
  padding: 54px 0 0 39px;
  color: #222;
  font-size: 46px;
  font-weight: 700;
  line-height: 52px;
}
.sector-title b {
  color: #e8414b;
  font-weight: 700;
}
.sector-list {
  display: flex;
  width: 1085px;
  border-radius: 12px 0 0 0;
  background: #f6f6f7;
}
.sector {
  position: relative;
  display: flex;
  flex-direction: column;
  align-items: center;
  width: 345.500px;
  padding-top: 40px;
}
.sector::after {
  content: "";
  position: absolute;
  right: 0;
  top: 66px;
  width: 2px;
  height: 80px;
  background: #ccc;
}
.sector span {
  height: 68px;
  font-size: 50.500px;
  line-height: 68px;
}
.sector .long {
  font-size: 36.700px;
}
.sector b {
  color: #e04048;
  font-size: 51px;
  line-height: 64px;
  letter-spacing: -1.300px;
}

/* bottom bar */
.bottom {
  display: flex;
  height: 170px;
  border-top: 2px solid #ccc;
  background: #f9f9fb;
}
.index {
  flex: none;
  width: 342px;
  padding: 26px 0 0 29px;
}
.index-num {
  display: flex;
  align-items: center;
  color: #12a05c;
  font-size: 51px;
  font-weight: 500;
}
.index-num svg {
  width: 30px;
  height: 16px;
  margin-left: 18px;
}
.index-name {
  display: flex;
  align-items: center;
  gap: 13px;
  color: #777;
  font-size: 39px;
  line-height: 38px;
}
.index-name span {
  color: #12a05c;
  font-size: 37px;
}
.act {
  position: relative;
  flex: none;
  width: 229.500px;
  text-align: center;
  font-size: 57px;
  font-weight: 500;
  line-height: 168px;
}
.act::before {
  content: "";
  position: absolute;
  left: 0;
  top: 36px;
  width: 2px;
  height: 95px;
  background: #dcdce0;
}
.more {
  display: flex;
  flex-direction: column;
  align-items: center;
  padding-top: 32px;
  color: #666;
  font-size: 36px;
  font-weight: 400;
  line-height: 56px;
}
.more svg {
  width: 58px;
  height: 58px;
}
```
